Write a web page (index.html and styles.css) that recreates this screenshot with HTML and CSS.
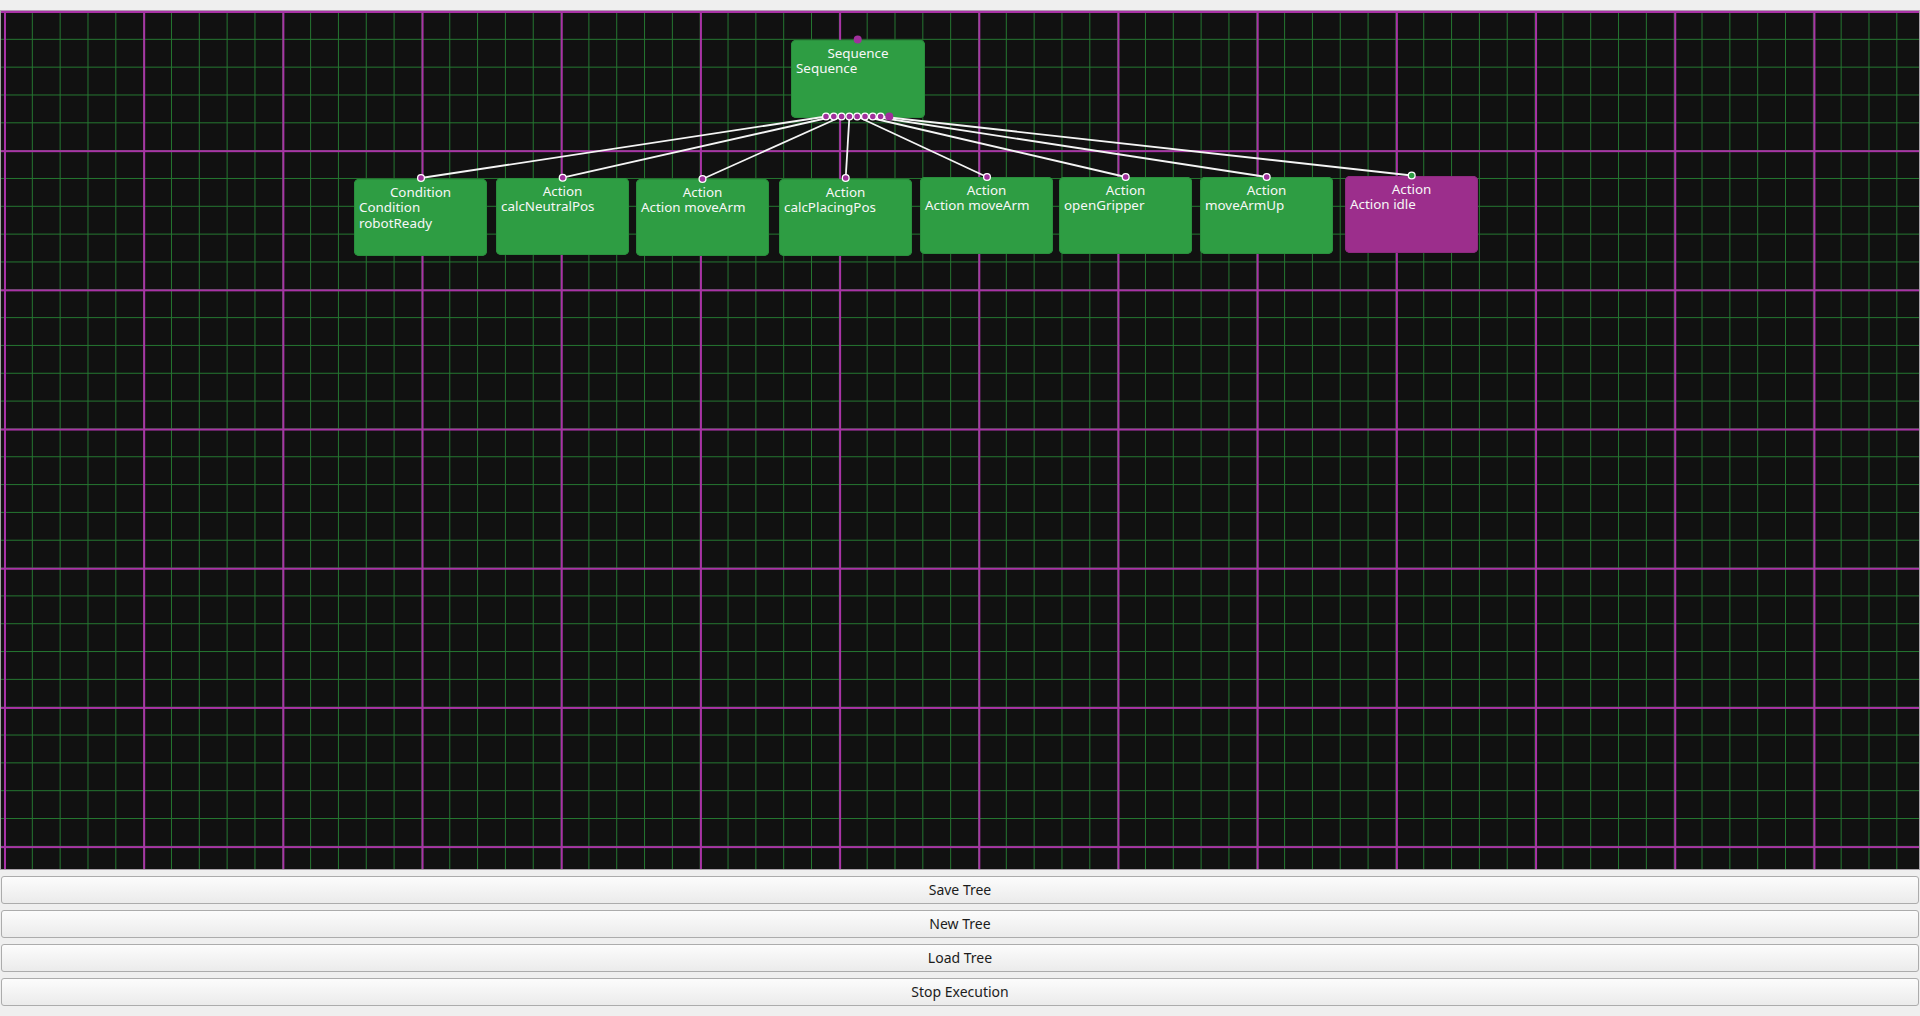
FILE: index.html
```html
<!DOCTYPE html>
<html>
<head>
<meta charset="utf-8">
<link rel="stylesheet" href="styles.css">
</head>
<body>
<div class="topbar"></div>
<div class="canvas">
  <div class="node green seq" style="left:790px;top:29px;width:134px;height:78px">
    <div class="title">Sequence</div>
    <div class="body">Sequence</div>
  </div>
  <div class="node green" style="left:353px;top:168px">
    <div class="title">Condition</div>
    <div class="body">Condition<br>robotReady</div>
  </div>
  <div class="node green" style="left:495px;top:167px">
    <div class="title">Action</div>
    <div class="body">calcNeutralPos</div>
  </div>
  <div class="node green" style="left:635px;top:168px">
    <div class="title">Action</div>
    <div class="body">Action moveArm</div>
  </div>
  <div class="node green" style="left:778px;top:168px">
    <div class="title">Action</div>
    <div class="body">calcPlacingPos</div>
  </div>
  <div class="node green" style="left:919px;top:166px">
    <div class="title">Action</div>
    <div class="body">Action moveArm</div>
  </div>
  <div class="node green" style="left:1058px;top:166px">
    <div class="title">Action</div>
    <div class="body">openGripper</div>
  </div>
  <div class="node green" style="left:1199px;top:166px">
    <div class="title">Action</div>
    <div class="body">moveArmUp</div>
  </div>
  <div class="node purple" style="left:1344px;top:165px">
    <div class="title">Action</div>
    <div class="body">Action idle</div>
  </div>

  <svg class="wires" width="1918" height="858" viewBox="0 0 1918 858">
    <g class="edge">
      <line x1="825" y1="105.5" x2="420" y2="167"/>
      <line x1="832.8" y1="105.5" x2="561.7" y2="166.7"/>
      <line x1="840.6" y1="105.5" x2="701.5" y2="168"/>
      <line x1="848.4" y1="105.5" x2="844.7" y2="167"/>
      <line x1="856.2" y1="105.5" x2="986" y2="166"/>
      <line x1="864" y1="105.5" x2="1124.7" y2="166"/>
      <line x1="871.8" y1="105.5" x2="1265.7" y2="166"/>
      <line x1="879.6" y1="105.5" x2="1410.7" y2="164.5"/>
    </g>
    <g class="port">
      <circle cx="825" cy="105.5" r="3.4"/>
      <circle cx="832.8" cy="105.5" r="3.4"/>
      <circle cx="840.6" cy="105.5" r="3.4"/>
      <circle cx="848.4" cy="105.5" r="3.4"/>
      <circle cx="856.2" cy="105.5" r="3.4"/>
      <circle cx="864" cy="105.5" r="3.4"/>
      <circle cx="871.8" cy="105.5" r="3.4"/>
      <circle cx="879.6" cy="105.5" r="3.4"/>
      <circle cx="420" cy="167" r="3.4"/>
      <circle cx="561.7" cy="166.7" r="3.4"/>
      <circle cx="701.5" cy="168" r="3.4"/>
      <circle cx="844.7" cy="167" r="3.4"/>
      <circle cx="986" cy="166" r="3.4"/>
      <circle cx="1124.7" cy="166" r="3.4"/>
      <circle cx="1265.7" cy="166" r="3.4"/>
    </g>
    <circle class="port-green" cx="1410.7" cy="164.5" r="3.4"/>
    <circle class="dot" cx="856.7" cy="28.5" r="4"/>
    <circle class="dot" cx="888.3" cy="105.5" r="4"/>
  </svg>
</div>
<div class="buttons">
  <button class="btn">Save Tree</button>
  <button class="btn">New Tree</button>
  <button class="btn">Load Tree</button>
  <button class="btn">Stop Execution</button>
</div>
</body>
</html>
```

FILE: styles.css
```css
html, body {
  margin: 0;
  padding: 0;
  width: 1920px;
  height: 1016px;
  overflow: hidden;
  background: #efefef;
  font-family: "Noto Sans", "DejaVu Sans", sans-serif;
}

.topbar {
  height: 10px;
}

.canvas {
  position: relative;
  height: 858px;
  border: 1px solid #a9a3a9;
  border-top-color: #b49ab4;
  background-color: #111111;
  background-image:
    linear-gradient(to right, #a933a6 1.6px, transparent 1.6px),
    linear-gradient(to bottom, #a933a6 1.6px, transparent 1.6px),
    linear-gradient(to right, #247630 1.3px, transparent 1.3px),
    linear-gradient(to bottom, #247630 1.3px, transparent 1.3px);
  background-size:
    139.2px 139.2px,
    139.2px 139.2px,
    27.84px 27.84px,
    27.84px 27.84px;
  background-position: 3px 0, 3px 0, 3px 0, 3px 0;
  overflow: hidden;
}

.node {
  position: absolute;
  width: 133px;
  height: 77px;
  border-radius: 5px;
  box-sizing: border-box;
  color: #f7f7f7;
  font-size: 13.4px;
}

.green {
  background: #2e9d43;
  box-shadow: inset 0 0 0 1px #2a8f3d;
}

.purple {
  background: #9c2e8c;
  box-shadow: inset 0 0 0 1px #8e2a80;
}

.title {
  padding-top: 6px;
  line-height: 14px;
  text-align: center;
}

.body {
  padding-left: 5px;
  line-height: 16px;
}

.wires {
  position: absolute;
  left: 0;
  top: 0;
  pointer-events: none;
}

.edge line {
  stroke: #f4f4f4;
  stroke-width: 1.8;
}

.port circle {
  fill: #a0309c;
  stroke: #ffffff;
  stroke-width: 1.3;
}

.port-green {
  fill: #2e9d43;
  stroke: #ffffff;
  stroke-width: 1.3;
}

.dot {
  fill: #a0309c;
}

.buttons {
  display: flex;
  flex-direction: column;
  gap: 6px;
  padding: 6px 1px 10px 1px;
}

.btn {
  height: 28px;
  box-sizing: border-box;
  border: 1px solid #acacac;
  border-radius: 3px;
  background: linear-gradient(to bottom, #fcfcfc, #ebebeb);
  font-family: "Noto Sans", "DejaVu Sans", sans-serif;
  font-size: 14px;
  line-height: 16px;
  color: #1c1c1c;
  padding: 0 0 1px 0;
  margin: 0;
}
```
